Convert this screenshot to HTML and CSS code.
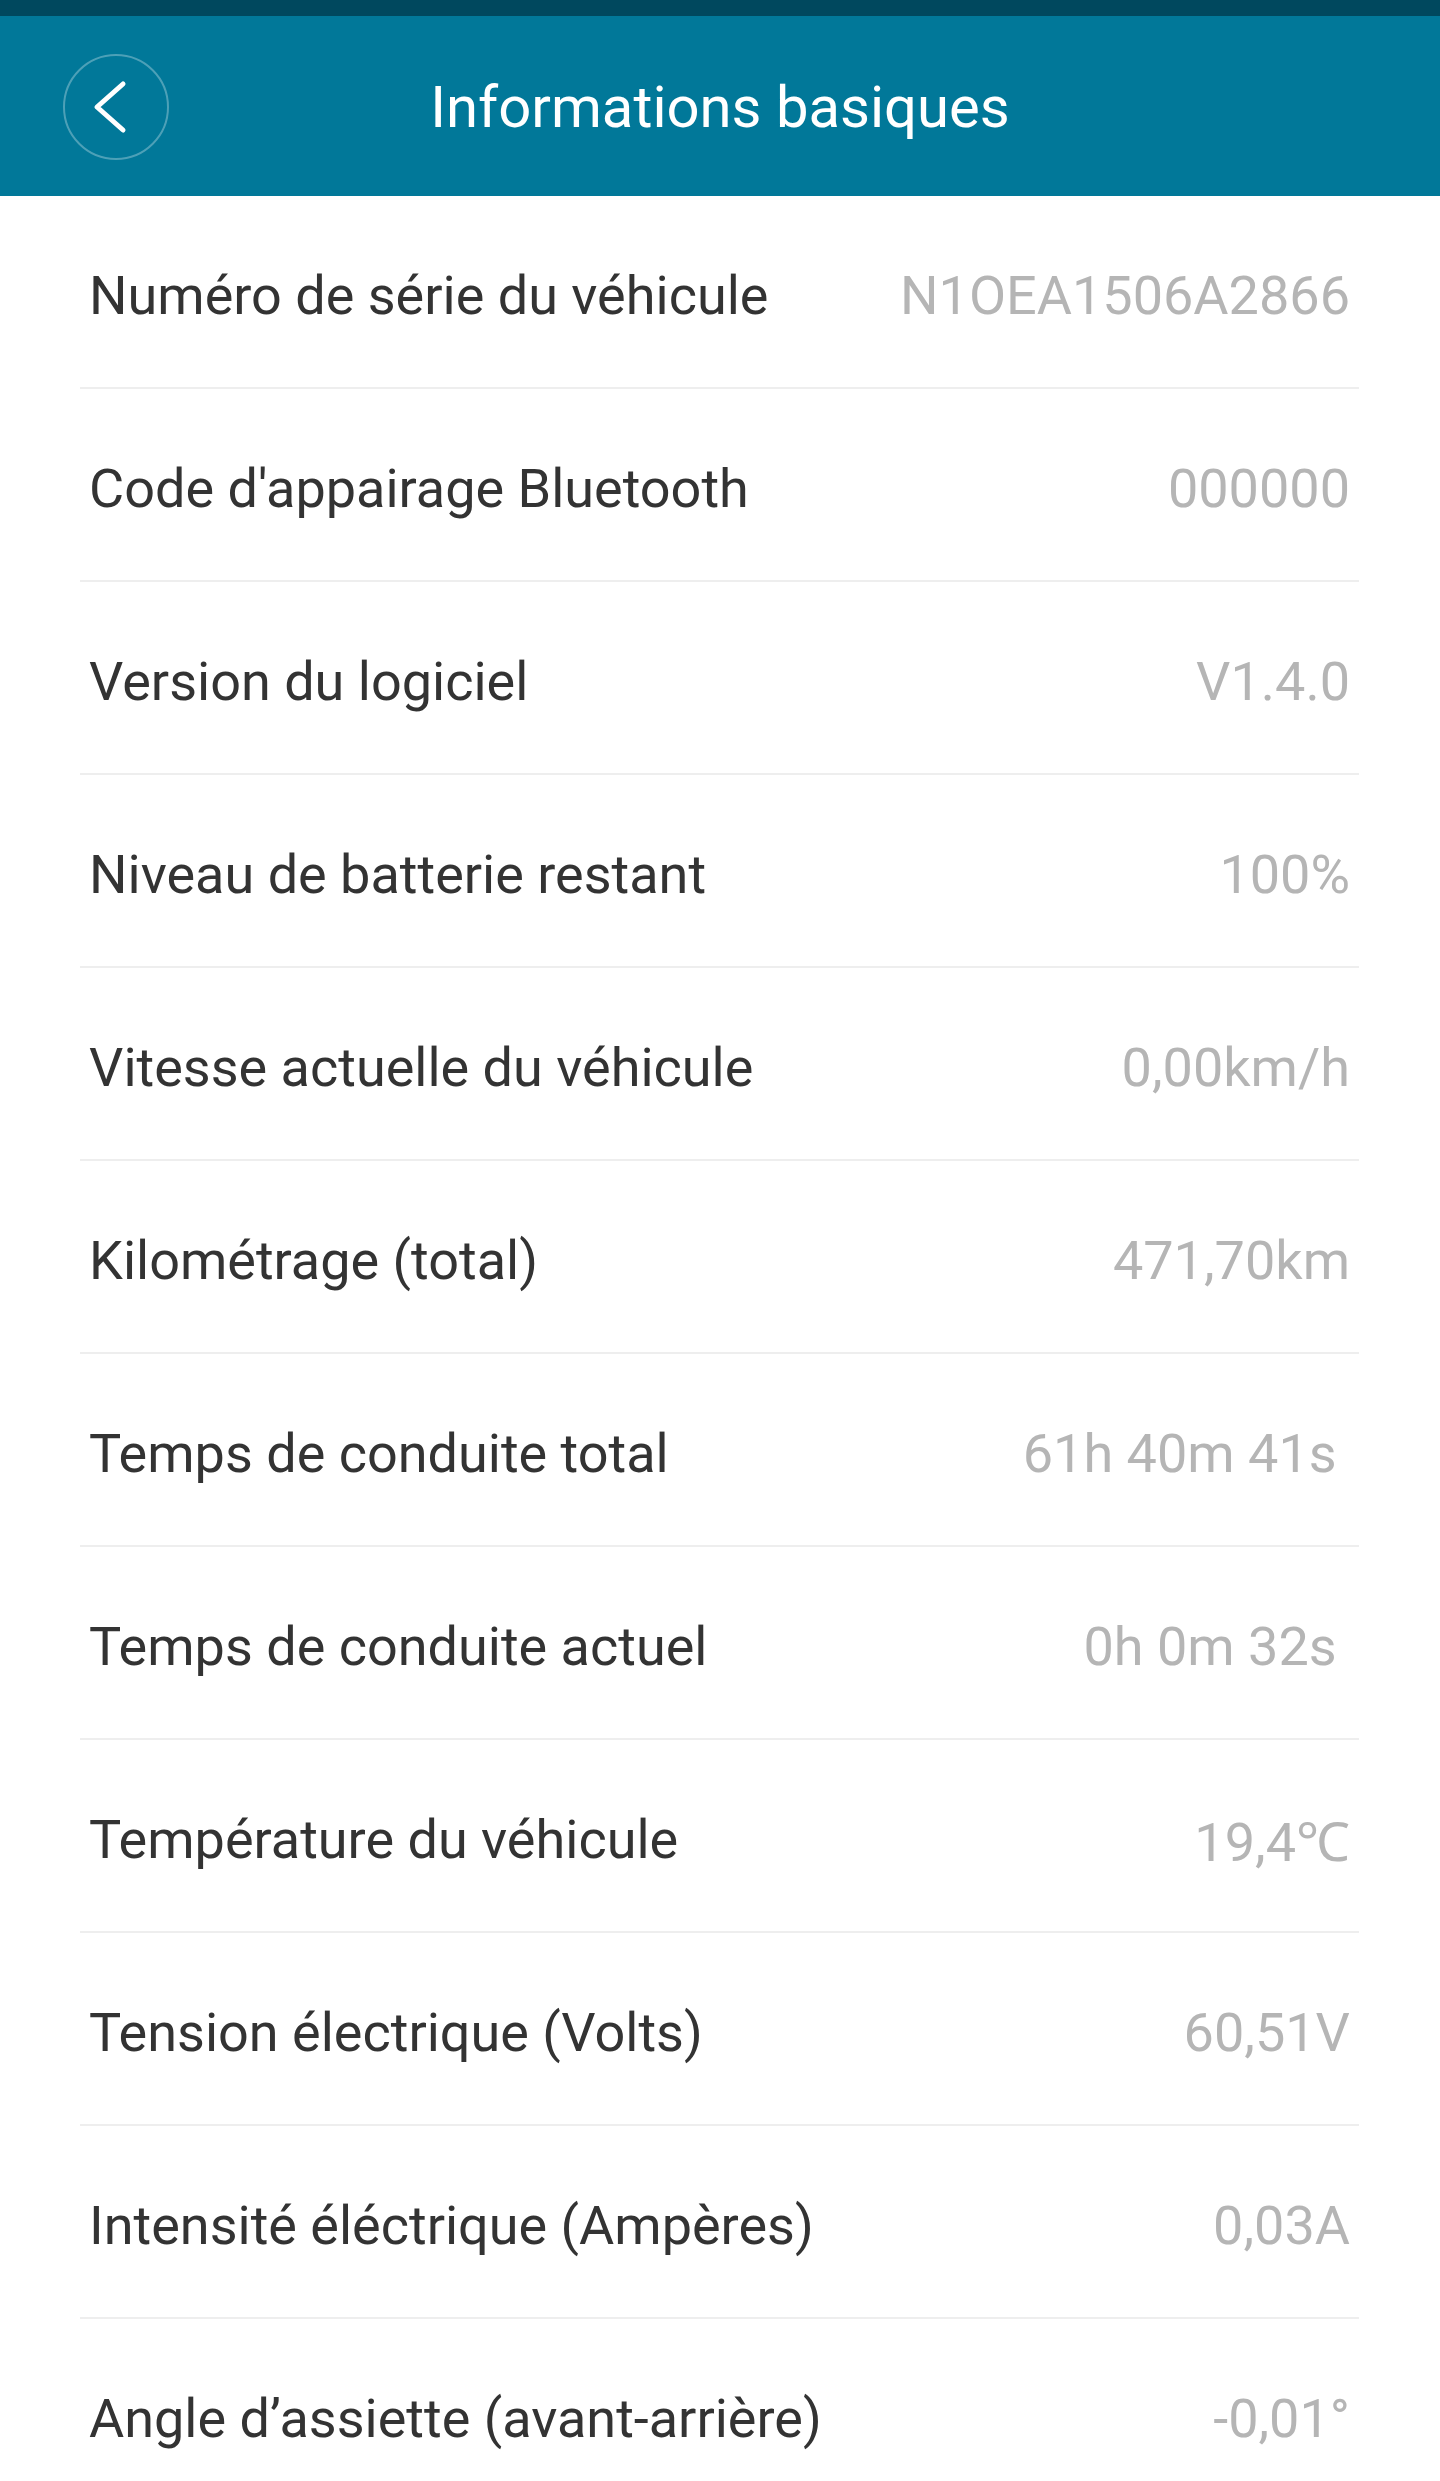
FILE: index.html
```html
<!DOCTYPE html>
<html lang="fr">
<head>
    <meta charset="UTF-8">
    <meta name="viewport" content="width=device-width, initial-scale=1.0">
    <title>Informations basiques</title>
    <link rel="stylesheet" href="styles.css">
</head>
<body>
    <div class="status-bar"></div>
    <header class="top-bar">
        <button class="back-btn" aria-label="Retour">
            <svg width="108" height="108" viewBox="0 0 108 108">
                <circle cx="54" cy="54" r="52" fill="none" stroke="rgba(255,255,255,0.3)" stroke-width="2"/>
                <polyline points="61,31 35,54 61,77" fill="none" stroke="#fff" stroke-width="5" stroke-linecap="round" stroke-linejoin="round"/>
            </svg>
        </button>
        <h1 class="title">Informations basiques</h1>
    </header>
    <ul class="info-list">
        <li class="info-row"><span class="label">Numéro de série du véhicule</span><span class="value">N1OEA1506A2866</span></li>
        <li class="info-row"><span class="label">Code d'appairage Bluetooth</span><span class="value">000000</span></li>
        <li class="info-row"><span class="label">Version du logiciel</span><span class="value">V1.4.0</span></li>
        <li class="info-row"><span class="label">Niveau de batterie restant</span><span class="value">100%</span></li>
        <li class="info-row"><span class="label">Vitesse actuelle du véhicule</span><span class="value">0,00km/h</span></li>
        <li class="info-row"><span class="label">Kilométrage (total)</span><span class="value">471,70km</span></li>
        <li class="info-row"><span class="label">Temps de conduite total</span><span class="value">61h 40m 41s&nbsp;</span></li>
        <li class="info-row"><span class="label">Temps de conduite actuel</span><span class="value">0h 0m 32s&nbsp;</span></li>
        <li class="info-row"><span class="label">Température du véhicule</span><span class="value">19,4℃</span></li>
        <li class="info-row"><span class="label">Tension électrique (Volts)</span><span class="value">60,51V</span></li>
        <li class="info-row"><span class="label">Intensité éléctrique (Ampères)</span><span class="value">0,03A</span></li>
        <li class="info-row"><span class="label">Angle d’assiette (avant-arrière)</span><span class="value">-0,01°</span></li>
    </ul>
</body>
</html>
```

FILE: styles.css
```css
*{
    margin: 0;
    padding: 0;
    box-sizing: border-box;
}
body{
    font-family: Roboto, "Liberation Sans", sans-serif;
    background: #fff;
}
.status-bar{
    height: 16px;
    background: #00485e;
}
.top-bar{
    height: 180px;
    background: #017899;
    display: flex;
    align-items: center;
    justify-content: center;
    position: relative;
}
.back-btn{
    position: absolute;
    left: 62px;
    top: 37px;
    width: 108px;
    height: 108px;
    border: none;
    background: none;
    display: flex;
}
.title{
    color: #fff;
    font-size: 58px;
    font-weight: 400;
    margin-top: 2px;
}
.info-list{
    list-style: none;
    padding: 0 81px 0 80px;
}
.info-row{
    height: 193px;
    border-bottom: 2px solid #eeeeee;
    display: flex;
    align-items: center;
    justify-content: space-between;
    padding: 8px 9px 0 9px;
    font-size: 54px;
}
.label{
    color: #333;
}
.value{
    color: #b5b5b5;
    white-space: pre;
}
```
